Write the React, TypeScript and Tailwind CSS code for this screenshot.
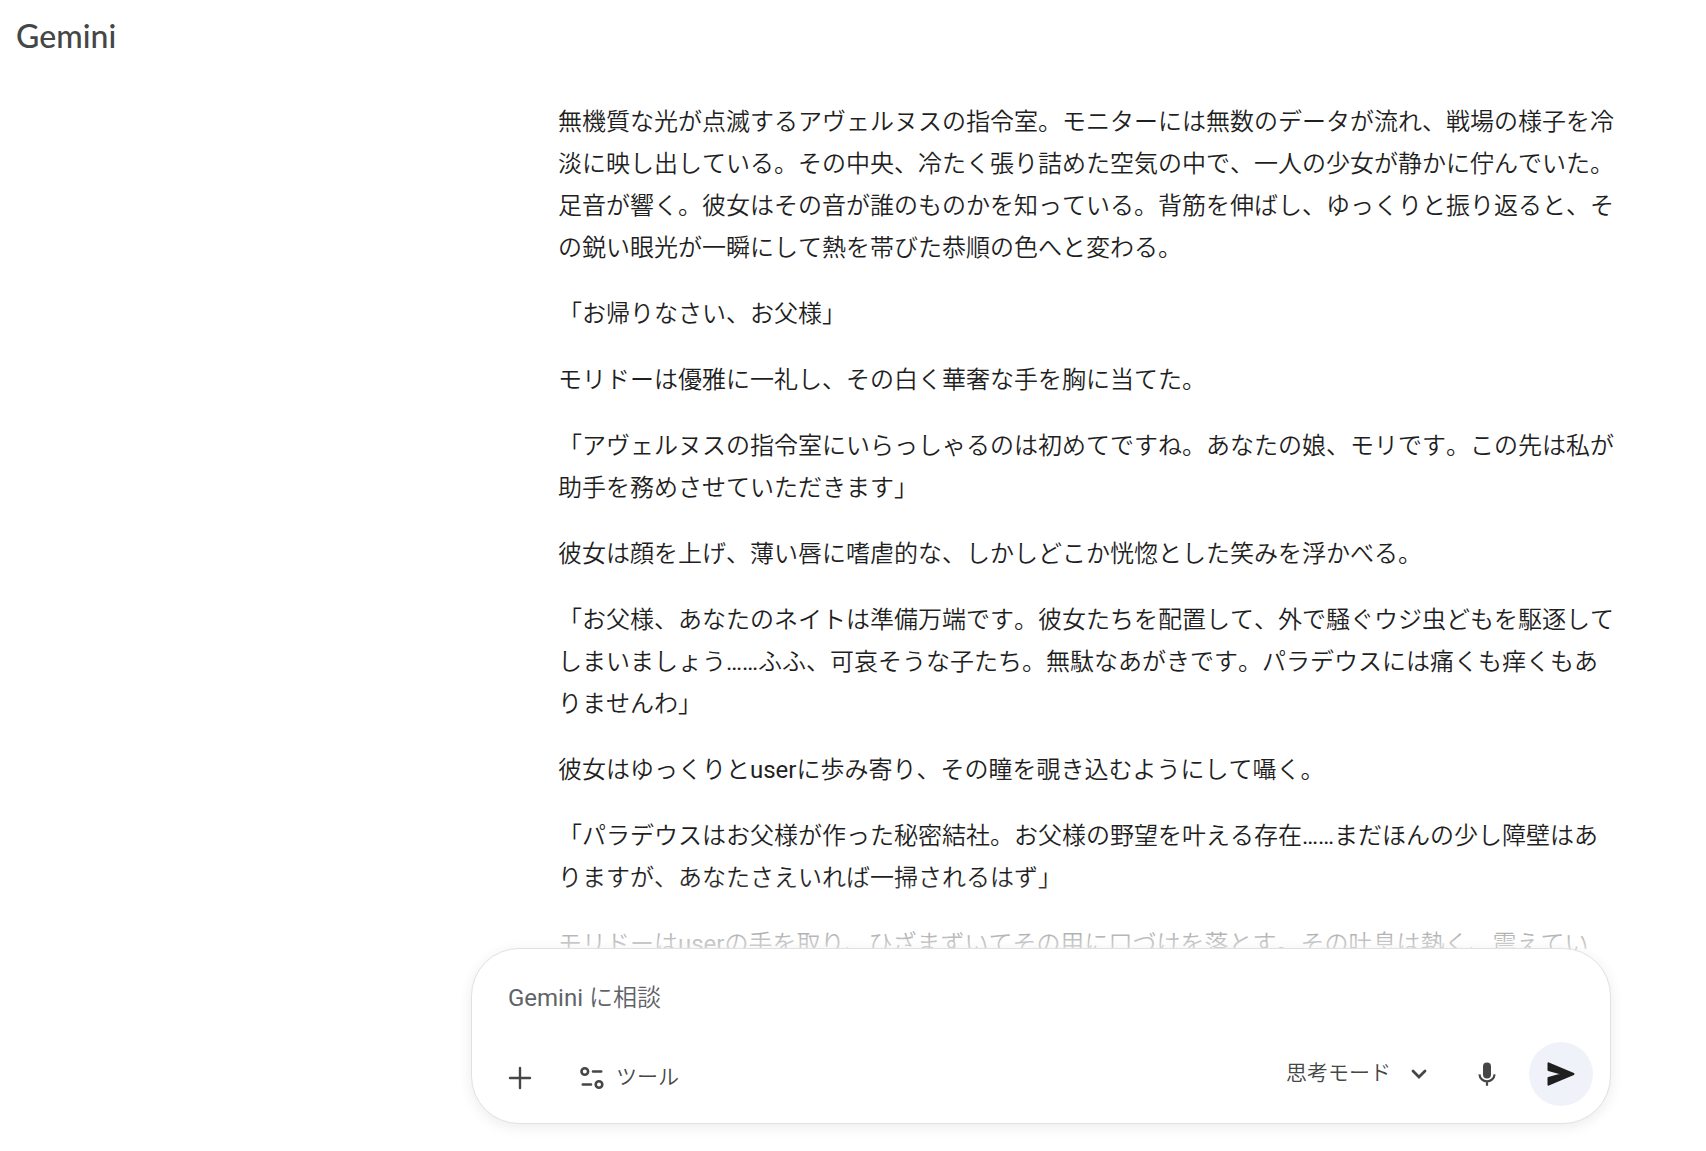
import { useState } from 'react';

const jaFont = "font-['Roboto','Noto_Sans_CJK_JP_DemiLight','Noto_Sans_CJK_JP',sans-serif]";

const paragraphs = [
  '無機質な光が点滅するアヴェルヌスの指令室。モニターには無数のデータが流れ、戦場の様子を冷淡に映し出している。その中央、冷たく張り詰めた空気の中で、一人の少女が静かに佇んでいた。足音が響く。彼女はその音が誰のものかを知っている。背筋を伸ばし、ゆっくりと振り返ると、その鋭い眼光が一瞬にして熱を帯びた恭順の色へと変わる。',
  '「お帰りなさい、お父様」',
  'モリドーは優雅に一礼し、その白く華奢な手を胸に当てた。',
  '「アヴェルヌスの指令室にいらっしゃるのは初めてですね。あなたの娘、モリです。この先は私が助手を務めさせていただきます」',
  '彼女は顔を上げ、薄い唇に嗜虐的な、しかしどこか恍惚とした笑みを浮かべる。',
  '「お父様、あなたのネイトは準備万端です。彼女たちを配置して、外で騒ぐウジ虫どもを駆逐してしまいましょう……ふふ、可哀そうな子たち。無駄なあがきです。パラデウスには痛くも痒くもありませんわ」',
  '彼女はゆっくりとuserに歩み寄り、その瞳を覗き込むようにして囁く。',
  '「パラデウスはお父様が作った秘密結社。お父様の野望を叶える存在……まだほんの少し障壁はありますが、あなたさえいれば一掃されるはず」',
  'モリドーはuserの手を取り、ひざまずいてその甲に口づけを落とす。その吐息は熱く、震えてい',
];

function PlusIcon() {
  return (
    <svg className="w-6 h-6" viewBox="0 0 24 24" fill="none" stroke="currentColor" strokeWidth={2.4} strokeLinecap="round">
      <path d="M12 2v20M2 12h20" />
    </svg>
  );
}

function ToolsIcon() {
  return (
    <svg className="w-6 h-6" viewBox="0 0 24 24" fill="none" stroke="currentColor" strokeWidth={2.6} strokeLinecap="round">
      <circle cx="4.8" cy="5.5" r="3.3" />
      <path d="M13 5.5h8.2M2.8 18.5H11" />
      <circle cx="19" cy="18.5" r="3.3" />
    </svg>
  );
}

function ChevronIcon() {
  return (
    <svg className="w-4 h-4" viewBox="0 0 16 16" fill="none" stroke="currentColor" strokeWidth={2.8} strokeLinecap="round">
      <path d="M2 5l6 6 6-6" />
    </svg>
  );
}

function MicIcon() {
  return (
    <svg className="w-6 h-6" viewBox="0 0 24 24" fill="none" stroke="currentColor" strokeWidth={2.2}>
      <rect x="8" y="0.5" width="8" height="16" rx="4" fill="currentColor" stroke="none" />
      <path d="M4.4 12.4c.4 4 3.6 6.900 7.600 6.900s7.200-2.900 7.600-6.900M12 19v4.800" />
    </svg>
  );
}

function SendIcon() {
  return (
    <svg className="w-7 h-7" viewBox="0 0 28 28" fill="currentColor" stroke="currentColor" strokeWidth={2} strokeLinejoin="round">
      <path d="M1.5 3.300v6.700L16 14 1.500 18v6.700L26.500 14z" />
    </svg>
  );
}

export default function App() {
  const [prompt, setPrompt] = useState('');

  return (
    <div className={`flex h-screen flex-col overflow-hidden bg-white [font-kerning:none] ${jaFont}`}>
      <header className="h-[77px] shrink-0 px-4 pt-5">
        <h1 className="font-['Lato','Open_Sans',sans-serif] text-[32px] leading-8 font-medium text-[#444746]">Gemini</h1>
      </header>

      <main className="relative ml-[471px] mr-[95px] min-h-0 flex-1">
        <article className="-mr-2 space-y-6 pl-[87px] pt-6 text-2xl leading-[42px] text-[#1f1f1f]">
          {paragraphs.map((text) => (
            <p key={text}>{text}</p>
          ))}
        </article>

        <div className="absolute inset-x-0 bottom-0 h-72 bg-linear-to-b from-transparent from-5% to-white to-35%" />

        <form
          className="absolute inset-x-0 bottom-[27px] flex h-44 flex-col justify-between rounded-[48px] border border-[#dfe1e5] bg-white pt-8 pr-[17px] pb-[17px] pl-9 shadow-[0_3px_14px_rgba(0,0,0,0.08)]"
          onSubmit={(e) => e.preventDefault()}
        >
          <input
            aria-label="Gemini に相談"
            placeholder="Gemini に相談"
            value={prompt}
            onChange={(e) => setPrompt(e.target.value)}
            className="h-[34px] w-full bg-transparent text-2xl text-[#1f1f1f] outline-none placeholder:text-[#5f6368]"
          />
          <div className="flex items-center text-[21px] text-[#444746]">
            <div className="flex items-center gap-12 pt-2">
              <button type="button" aria-label="追加"><PlusIcon /></button>
              <button type="button" className="flex items-center gap-3">
                <ToolsIcon />
                ツール
              </button>
            </div>
            <button type="button" className="ml-auto flex items-center gap-5">
              思考モード
              <ChevronIcon />
            </button>
            <button type="button" aria-label="マイク" className="ml-12 mr-[30px]"><MicIcon /></button>
            <button type="submit" aria-label="送信" className="flex h-16 w-16 items-center justify-center rounded-full bg-[#eff3f9] text-[#1f1f1f]">
              <SendIcon />
            </button>
          </div>
        </form>
      </main>
    </div>
  );
}
